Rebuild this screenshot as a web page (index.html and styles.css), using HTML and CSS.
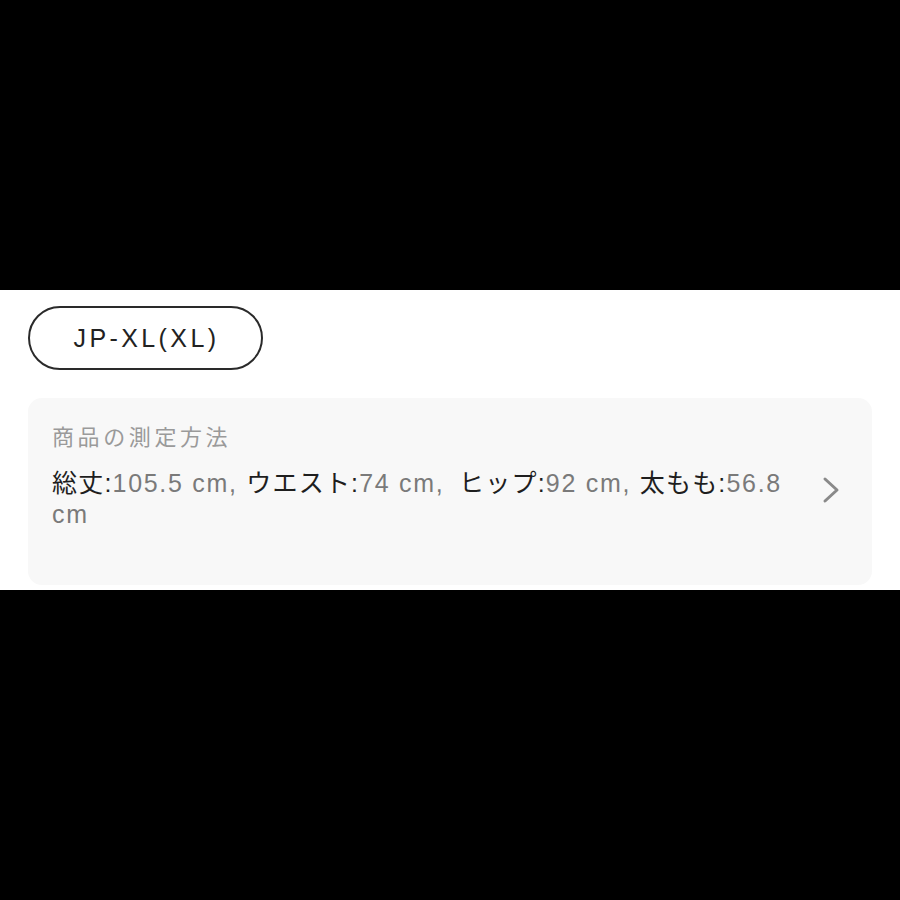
FILE: index.html
```html
<!DOCTYPE html>
<html lang="ja">
<head>
<meta charset="utf-8">
<link rel="stylesheet" href="styles.css">
</head>
<body>
<div class="band">
  <div class="pill">JP-XL(XL)</div>
  <div class="card">
    <div class="body">
      <div class="title">商品の測定方法</div>
      <div class="specs"><span class="k">総丈:</span><span class="v">105.5 cm, </span><span class="k">ウエスト:</span><span class="v">74 cm, </span><span class="k gap">ヒップ:</span><span class="v">92 cm, </span><span class="k">太もも:</span><span class="v">56.8 cm</span></div>
    </div>
    <svg class="chev" width="18" height="28" viewBox="0 0 18 28"><polyline points="3,3 15,14 3,25" fill="none" stroke="#8a8a8a" stroke-width="3" stroke-linecap="round" stroke-linejoin="round"/></svg>
  </div>
</div>
</body>
</html>
```
FILE: styles.css
```css
html, body {
  margin: 0;
  padding: 0;
  background: #000;
  height: 900px;
}
body {
  font-family: "Liberation Sans", "Noto Sans CJK JP", sans-serif;
}
.band {
  margin-top: 290px;
  height: 300px;
  box-sizing: border-box;
  background: #fff;
  padding: 16px 28px 0 28px;
}
.pill {
  width: 235px;
  height: 64px;
  box-sizing: border-box;
  border: 2px solid #2a2a2a;
  border-radius: 32px;
  display: flex;
  align-items: center;
  justify-content: center;
  font-size: 25px;
  color: #222;
  letter-spacing: 3.4px;
  padding-left: 2px;
}
.card {
  margin-top: 28px;
  height: 187px;
  box-sizing: border-box;
  background: #f8f8f8;
  border-radius: 14px;
  padding: 24px 30px 0 24px;
  display: flex;
  align-items: flex-start;
}
.body {
  width: 752px;
}
.title {
  font-size: 22px;
  line-height: 32px;
  color: #9a9a9a;
  letter-spacing: 3.6px;
}
.specs {
  margin-top: 14px;
  font-size: 25px;
  line-height: 31px;
}
.k { color: #1e1e1e; letter-spacing: 1.2px; }
.gap { margin-left: 6px; }
.v { color: #7a7a7a; letter-spacing: 1.7px; }
.chev {
  margin-left: auto;
  margin-top: 54px;
  margin-right: 2px;
}
```
